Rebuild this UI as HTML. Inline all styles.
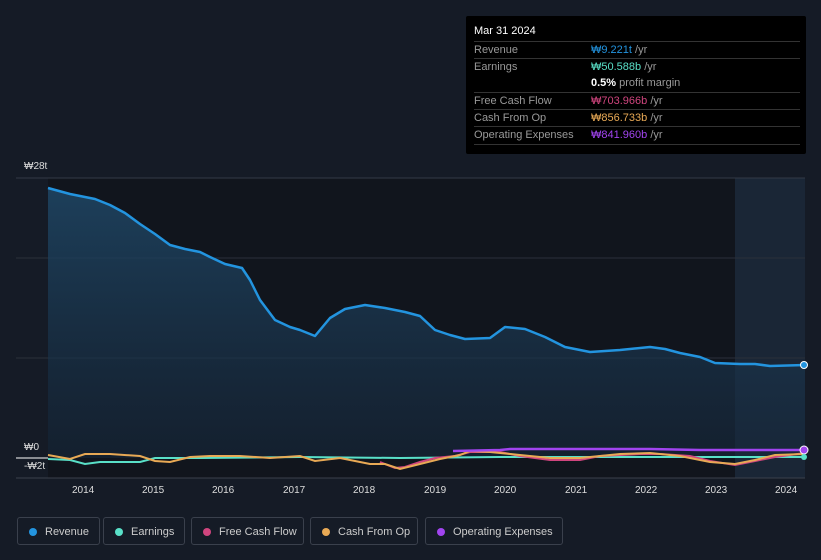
<!DOCTYPE html>
<html><head><meta charset="utf-8"><style>
body{margin:0;width:821px;height:560px;background:#151b26;font-family:"Liberation Sans","Noto Sans CJK KR",sans-serif;overflow:hidden;position:relative}
.tt{position:absolute;left:466px;top:16px;width:340px;height:138px;background:#000;border-radius:2px}
.tt .h{position:absolute;left:8px;top:9px;color:#fff;font-size:11px}
.row{position:absolute;left:8px;width:326px;border-top:1px solid #333;height:17px;font-size:11px;color:#999;line-height:16px}
.row span.v{position:absolute;left:117px}
.lg{position:absolute;top:517px;height:28px;border:1px solid #3a404c;border-radius:3px;color:#ccc;font-size:11px;line-height:28px;box-sizing:border-box}
.lg i{position:absolute;left:11px;top:10px;width:8px;height:8px;border-radius:50%}
.lg span{position:absolute;left:27px}
.ax{position:absolute;color:#ddd;font-size:10px}
</style></head><body>
<svg width="821" height="560" style="position:absolute;left:0;top:0">
<defs><linearGradient id="g" x1="0" y1="0" x2="0" y2="1"><stop offset="0" stop-color="#1f4766" stop-opacity=".85"/><stop offset="1" stop-color="#16273a" stop-opacity=".6"/></linearGradient></defs>
<rect x="48" y="178" width="687" height="300" fill="#11151d"/>
<rect x="735" y="178" width="70" height="300" fill="#1a2636"/>
<line x1="16" y1="178" x2="805" y2="178" stroke="#333a46"/>
<line x1="16" y1="258" x2="805" y2="258" stroke="#2a303b"/>
<line x1="16" y1="358" x2="805" y2="358" stroke="#2a303b"/>
<line x1="16" y1="478" x2="805" y2="478" stroke="#3a404c"/>
<path d="M48,188 L70,194 95,199 110,205 125,213 140,224 155,234 170,245 185,249 200,252 210,257 225,264 242,268 250,280 260,300 275,320 290,327 300,330 315,336 330,318 345,309 365,305 385,308 405,312 420,316 435,330 450,335 465,339 490,338 505,327 525,329 545,337 565,347 590,352 620,350 650,347 665,349 680,353 700,357 715,363 740,364 755,364 770,366 805,365 L805,458 L48,458Z" fill="url(#g)"/>
<path d="M48,188 L70,194 95,199 110,205 125,213 140,224 155,234 170,245 185,249 200,252 210,257 225,264 242,268 250,280 260,300 275,320 290,327 300,330 315,336 330,318 345,309 365,305 385,308 405,312 420,316 435,330 450,335 465,339 490,338 505,327 525,329 545,337 565,347 590,352 620,350 650,347 665,349 680,353 700,357 715,363 740,364 755,364 770,366 805,365" fill="none" stroke="#2394df" stroke-width="2.5" stroke-linejoin="round"/>
<line x1="16" y1="458" x2="48" y2="458" stroke="#fff"/>
<path d="M48,459 L70,460 85,464 100,462 140,462 155,458 200,458 300,457 400,458 500,457 600,457 700,457 805,457" fill="none" stroke="#59e0c8" stroke-width="2"/>
<path d="M380,462 L395,468 405,467 420,462 435,458 455,456 470,452 500,452 520,456 550,460 580,460 600,456 620,455 640,454 660,454 690,456 710,461 735,465 755,461 775,457 805,453" fill="none" stroke="#d0457e" stroke-width="2"/>
<path d="M48,455 L70,459 85,454 110,454 140,456 155,461 170,462 190,457 210,456 240,456 270,458 300,456 315,461 340,458 355,461 370,464 385,464 400,469 420,464 440,459 460,455 470,451 490,452 520,455 550,458 580,458 600,456 620,454 650,453 680,456 710,462 735,464 755,460 775,455 805,454" fill="none" stroke="#e8a955" stroke-width="2"/>
<path d="M453,451 L500,450 L510,449 L580,449 L650,449 L700,450 L805,450" fill="none" stroke="#a144ef" stroke-width="2.5"/>
<circle cx="804" cy="365" r="3.5" fill="#2394df" stroke="#fff" stroke-width="1"/>
<circle cx="804" cy="450" r="4" fill="#a144ef" stroke="#fff" stroke-width="1"/>
<circle cx="804" cy="457" r="3" fill="#59e0c8"/>
</svg>
<div class="ax" style="left:24px;top:161px">₩28t</div>
<div class="ax" style="left:24px;top:442px">₩0</div>
<div class="ax" style="left:24px;top:461px">-₩2t</div>
<div class="ax" style="left:72px;top:485px">2014</div><div class="ax" style="left:142px;top:485px">2015</div><div class="ax" style="left:212px;top:485px">2016</div><div class="ax" style="left:283px;top:485px">2017</div><div class="ax" style="left:353px;top:485px">2018</div><div class="ax" style="left:424px;top:485px">2019</div><div class="ax" style="left:494px;top:485px">2020</div><div class="ax" style="left:565px;top:485px">2021</div><div class="ax" style="left:635px;top:485px">2022</div><div class="ax" style="left:705px;top:485px">2023</div><div class="ax" style="left:775px;top:485px">2024</div>
<div class="tt"><div class="h">Mar 31 2024</div>
<div class="row" style="top:25px">Revenue<span class="v"><b style="font-weight:normal;color:#2394df">₩9.221t</b> /yr</span></div>
<div class="row" style="top:42px">Earnings<span class="v"><b style="font-weight:normal;color:#59e0c8">₩50.588b</b> /yr</span></div>
<div class="row" style="top:59px;border-top:none"><span class="v"><b style="color:#fff">0.5%</b> profit margin</span></div>
<div class="row" style="top:76px">Free Cash Flow<span class="v"><b style="font-weight:normal;color:#d0457e">₩703.966b</b> /yr</span></div>
<div class="row" style="top:93px">Cash From Op<span class="v"><b style="font-weight:normal;color:#e8a955">₩856.733b</b> /yr</span></div>
<div class="row" style="top:110px">Operating Expenses<span class="v"><b style="font-weight:normal;color:#a144ef">₩841.960b</b> /yr</span></div>
<div class="row" style="top:128px;height:0"></div>
</div>
<div class="lg" style="left:17px;width:83px"><i style="background:#2394df"></i><span>Revenue</span></div>
<div class="lg" style="left:103px;width:82px"><i style="background:#59e0c8"></i><span>Earnings</span></div>
<div class="lg" style="left:191px;width:113px"><i style="background:#d0457e"></i><span>Free Cash Flow</span></div>
<div class="lg" style="left:310px;width:108px"><i style="background:#e8a955"></i><span>Cash From Op</span></div>
<div class="lg" style="left:425px;width:138px"><i style="background:#a144ef"></i><span>Operating Expenses</span></div>
</body></html>
